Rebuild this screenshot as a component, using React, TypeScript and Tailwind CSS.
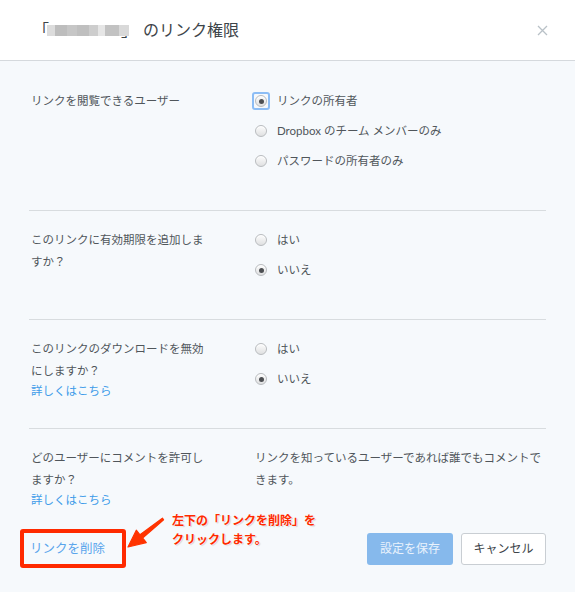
import React from 'react';

const font = { fontFamily: 'Lato, "Noto Sans CJK JP", sans-serif' };

function Radio({ checked, focused, label }: { checked?: boolean; focused?: boolean; label: string }) {
  return (
    <div className="flex h-[22px] items-center">
      <div className="relative flex h-[12px] w-[12px] items-center justify-center">
        {focused && (
          <div className="absolute -inset-[3px] rounded-[3px] border-2 border-[#8cbdf5]" />
        )}
        <div className="flex h-[12px] w-[12px] items-center justify-center rounded-full border border-[#b9bcbf] bg-gradient-to-b from-[#fdfdfd] to-[#dfe0e1] shadow-[inset_0_1px_0_#fff]">
          {checked && <div className="h-[5px] w-[5px] rounded-full bg-[#4c4f52]" />}
        </div>
      </div>
      <span className="ml-[10px] text-[11.5px] text-[#50565b]">{label}</span>
    </div>
  );
}

function Section({
  label,
  link,
  last,
  first,
  children,
}: {
  label: React.ReactNode;
  link?: boolean;
  last?: boolean;
  first?: boolean;
  children: React.ReactNode;
}) {
  return (
    <div
      className={
        'grid grid-cols-[226px_1fr] ' +
        (first ? 'pt-[29px] ' : 'pt-[18px] ') +
        (last ? 'pb-0' : 'pb-[28px] border-b border-[#d8dcdf]')
      }
    >
      <div className="pl-[2px]">
        <div className="w-[180px] text-[11.5px] leading-[22px] text-[#50565b]">{label}</div>
        {link && <div className="text-[11.5px] leading-[18px] text-[#3d9be9]">詳しくはこちら</div>}
      </div>
      <div>{children}</div>
    </div>
  );
}

export default function App() {
  return (
    <div className="relative flex h-[592px] w-[575px] flex-col bg-[#f6f9fc]" style={font}>
      {/* Header */}
      <div className="flex h-[61px] shrink-0 items-center justify-between border-b border-[#d5d9dd] bg-white pl-[33px] pr-[27px]">
        <div className="flex items-center text-[16px] text-[#3d4449]">
          <span>「</span>
          <span className="-ml-[2px] flex h-[11px] w-[82px] blur-[0.6px]">
            <span className="w-[8px] bg-[#dcdcdc]" />
            <span className="w-[12px] bg-[#bdbdbd]" />
            <span className="w-[10px] bg-[#c6c6c6]" />
            <span className="w-[12px] bg-[#bfbfbf]" />
            <span className="w-[9px] bg-[#cdcdcd]" />
            <span className="w-[7px] bg-[#e6e6e6]" />
            <span className="w-[14px] bg-[#c2c2c2]" />
            <span className="w-[10px] bg-[#d9d9d9]" />
          </span>
          <span className="-ml-[8px]">」</span>
          <span className="ml-[6px]">のリンク権限</span>
        </div>
        <svg width="11" height="11" viewBox="0 0 11 11">
          <path d="M1 1 L10 10 M10 1 L1 10" stroke="#b9c1c7" strokeWidth="1.3" />
        </svg>
      </div>

      {/* Body */}
      <div className="px-[29px]">
        <Section first label="リンクを閲覧できるユーザー">
          <div className="mb-[10px] flex flex-col gap-[8px]">
            <Radio checked focused label="リンクの所有者" />
            <Radio label="Dropbox のチーム メンバーのみ" />
            <Radio label="パスワードの所有者のみ" />
          </div>
        </Section>
        <Section label="このリンクに有効期限を追加しますか？">
          <div className="mb-[10px] flex flex-col gap-[8px]">
            <Radio label="はい" />
            <Radio checked label="いいえ" />
          </div>
        </Section>
        <Section link label="このリンクのダウンロードを無効にしますか？">
          <div className="mb-[10px] flex flex-col gap-[8px]">
            <Radio label="はい" />
            <Radio checked label="いいえ" />
          </div>
        </Section>
        <Section last link label="どのユーザーにコメントを許可しますか？">
          <div className="w-[292px] text-[11.5px] leading-[22px] text-[#50565b]">
            リンクを知っているユーザーであれば誰でもコメントできます。
          </div>
        </Section>

        {/* Footer */}
        <div className="relative mt-[24px] flex items-center justify-between">
          <div className="relative pl-[1px] text-[12.5px] text-[#5aa5ec]">
            リンクを削除
            <div className="absolute -left-[9px] -top-[11px] h-[39px] w-[106px] rounded-[3px] border-[4px] border-[#ff2a00]" />
          </div>
          <div className="flex gap-[8px]">
            <button className="h-[32px] w-[86px] rounded-[3px] bg-[#86b9ec] text-[12px] text-[#e9f2fc]">設定を保存</button>
            <button className="h-[32px] w-[85px] rounded-[3px] border border-[#c9ced3] bg-white text-[12px] text-[#3d4449]">
              キャンセル
            </button>
          </div>
        </div>
      </div>

      {/* Annotation overlay */}
      <svg className="pointer-events-none absolute left-[120px] top-[505px]" width="50" height="50" viewBox="0 0 50 50">
        <polygon
          points="43.6,14.8 22.6,33 26.3,37.6 8,42 16.3,25.2 20,29.8 42.4,13.2"
          fill="#ff3300"
          stroke="#ff3300"
          strokeWidth="1.2"
          strokeLinejoin="round"
        />
      </svg>
      <div className="pointer-events-none absolute left-[172px] top-[511px] text-[12px] font-bold leading-[19px] text-[#ff2a00] [text-shadow:0_0_2px_#fff,0_1px_2px_#fff,1px_1px_1px_rgba(0,0,0,0.25)]">
        <div>左下の「リンクを削除」を</div>
        <div>クリックします。</div>
      </div>
    </div>
  );
}
